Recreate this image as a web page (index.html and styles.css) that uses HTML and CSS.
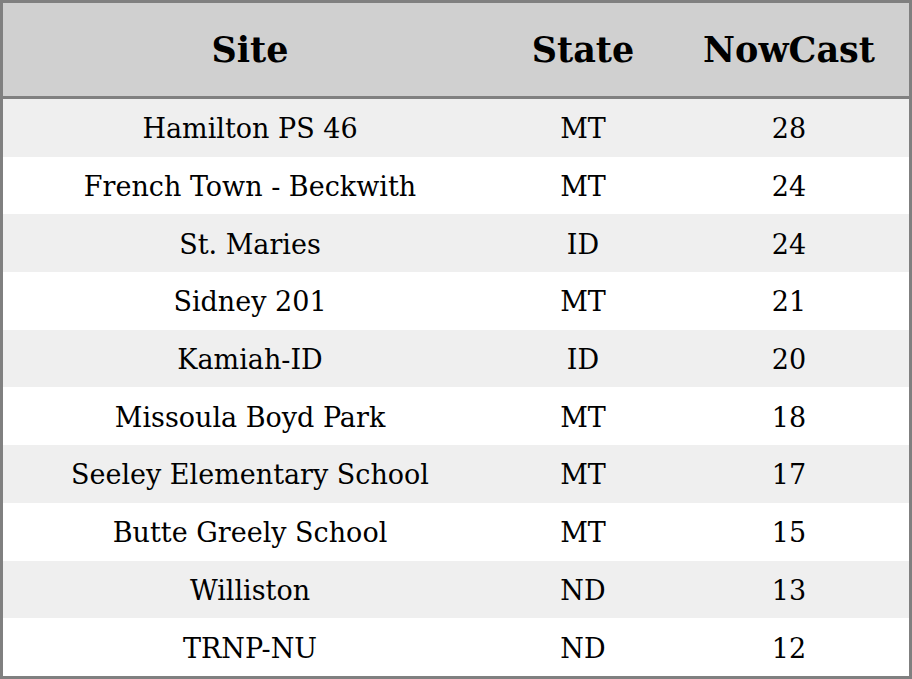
FILE: index.html
```html
<!DOCTYPE html>
<html>
<head>
<meta charset="utf-8">
<link rel="stylesheet" href="styles.css">
</head>
<body>
<table class="aq">
  <thead>
    <tr><th class="c-site">Site</th><th class="c-state">State</th><th class="c-now">NowCast</th></tr>
  </thead>
  <tbody>
    <tr><td>Hamilton PS 46</td><td>MT</td><td>28</td></tr>
    <tr><td>French Town - Beckwith</td><td>MT</td><td>24</td></tr>
    <tr><td>St. Maries</td><td>ID</td><td>24</td></tr>
    <tr><td>Sidney 201</td><td>MT</td><td>21</td></tr>
    <tr><td>Kamiah-ID</td><td>ID</td><td>20</td></tr>
    <tr><td>Missoula Boyd Park</td><td>MT</td><td>18</td></tr>
    <tr><td>Seeley Elementary School</td><td>MT</td><td>17</td></tr>
    <tr><td>Butte Greely School</td><td>MT</td><td>15</td></tr>
    <tr><td>Williston</td><td>ND</td><td>13</td></tr>
    <tr><td>TRNP-NU</td><td>ND</td><td>12</td></tr>
  </tbody>
</table>
</body>
</html>
```
FILE: styles.css
```css
html, body {
  margin: 0;
  padding: 0;
  background: #ffffff;
}
.aq {
  width: 912px;
  height: 679px;
  border-collapse: separate;
  border-spacing: 0;
  border: 3px solid #808080;
  box-sizing: border-box;
  font-family: "DejaVu Serif", serif;
  color: #000;
  table-layout: fixed;
}
.aq th {
  background: #d0d0d0;
  font-weight: bold;
  font-size: 35px;
  height: 93px;
  padding: 0;
  border-bottom: 3px solid #808080;
  text-align: center;
}
.c-site { width: 494px; }
.c-state { width: 172px; }
.c-now { width: 240px; }
.aq td {
  font-size: 27px;
  height: 55.7px;
  padding: 2px 0 0 0;
  text-align: center;
}
.aq tbody tr:nth-child(odd) td { background: #efefef; }
.aq tbody tr:nth-child(even) td { background: #ffffff; }
```
